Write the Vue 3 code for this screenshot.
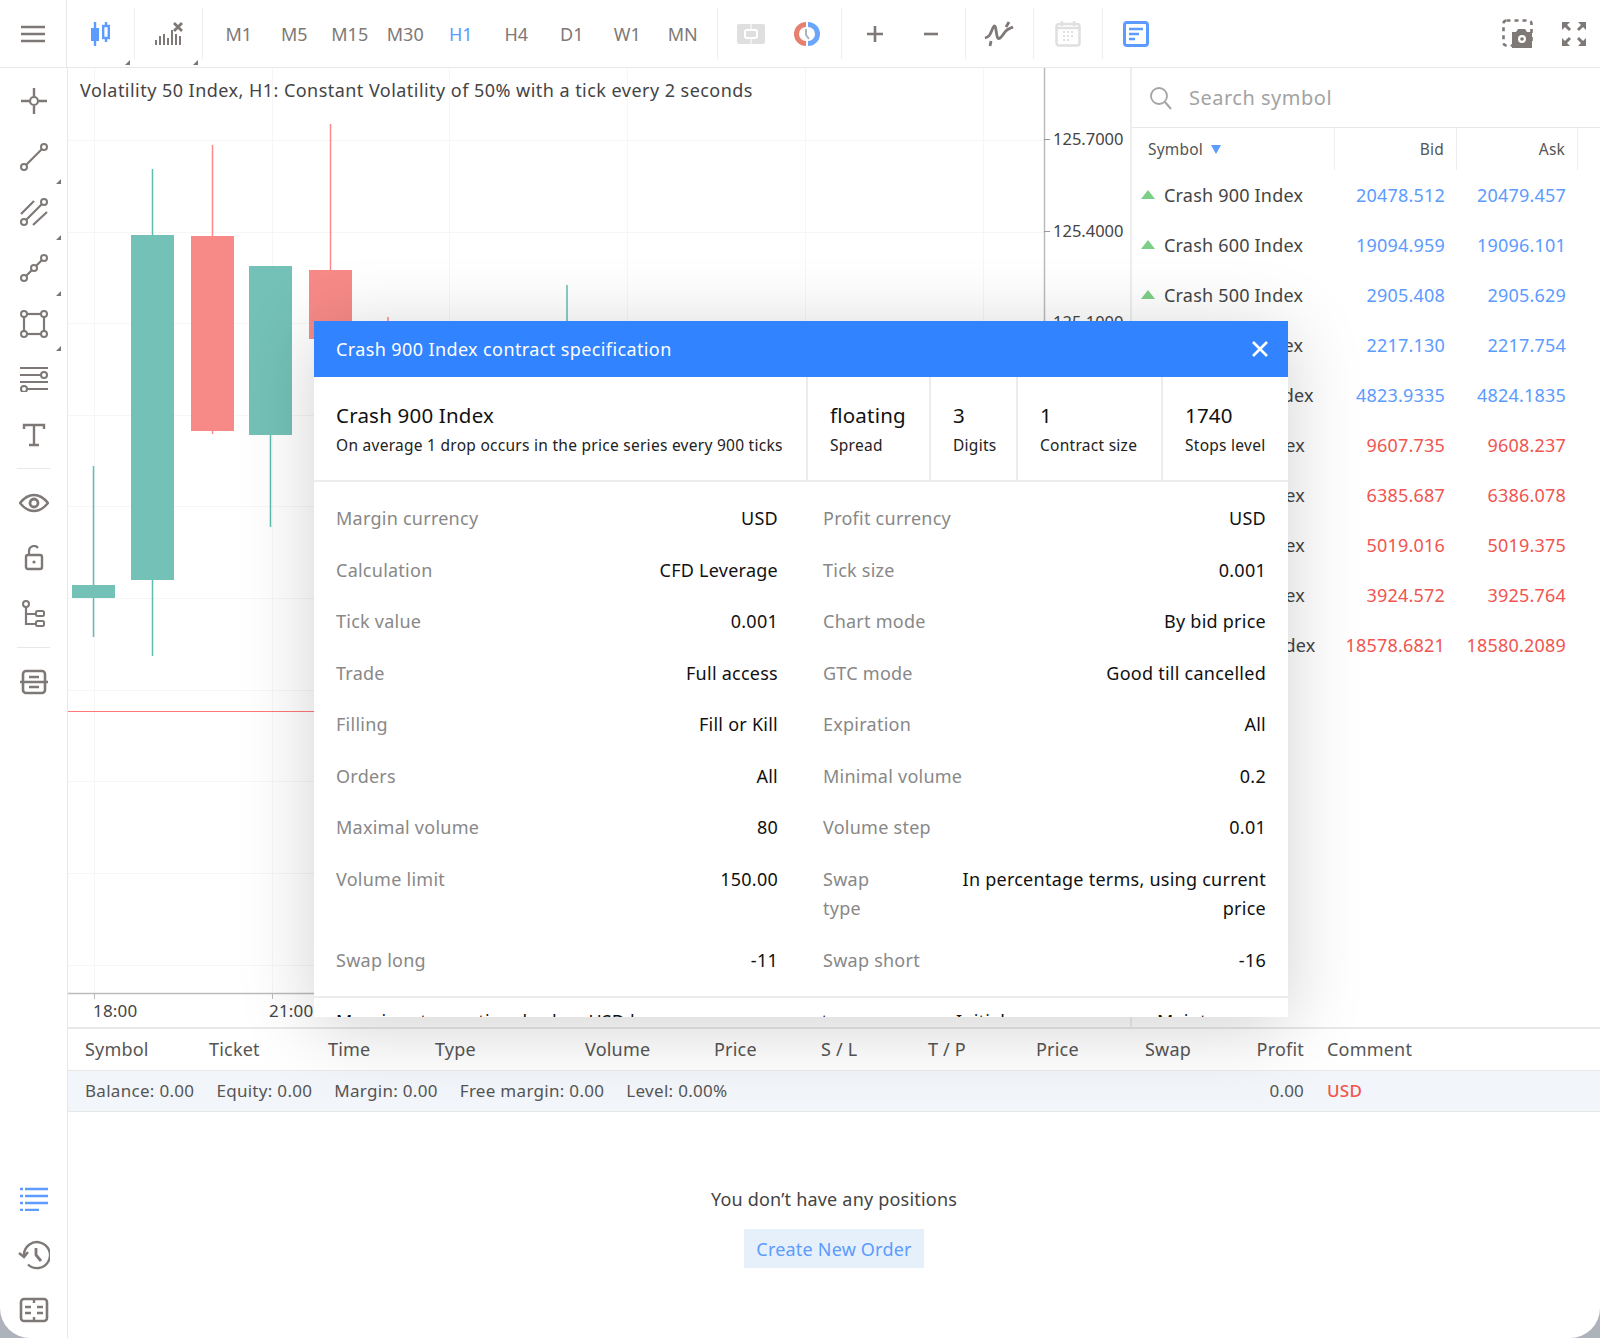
<template>
  <div class="terminal">
    <header class="topbar">
      <button class="menu-btn">
        <svg width="26" height="18" viewBox="0 0 26 18"><path d="M1 2h24M1 9h24M1 16h24" class="ic" stroke-width="2.4"/></svg>
      </button>
      <div class="tool-wide corner">
        <svg width="24" height="26" viewBox="0 0 24 26"><path d="M6 1v24M17 1v20" stroke="#5c9bff" stroke-width="2.4" fill="none"/><rect x="2" y="7" width="8" height="13" fill="#5c9bff"/><rect x="14.2" y="5" width="5.6" height="12" fill="#fff" stroke="#5c9bff" stroke-width="2.4"/></svg>
      </div>
      <div class="tool-wide corner">
        <svg width="30" height="26" viewBox="0 0 30 26"><path d="M2 19v5M6 15v9M10 13v11M14 17v7M18 9v15M22 13v11M26 15v9" class="ic" stroke-width="2"/><path d="M20 2l8 8M28 2l-8 8" class="ic" stroke-width="2.8"/></svg>
      </div>
      <div class="group tf-group">
        <span v-for="t in timeframes" :key="t" :class="['tf', { active: t === 'H1' }]">{{ t }}</span>
      </div>
      <div class="group">
        <div class="tool">
          <svg width="28" height="22" viewBox="0 0 28 22"><rect width="28" height="20" y="1" rx="2" fill="#dfdfdf"/><rect x="8" y="7" width="12" height="8" rx="2" fill="none" stroke="#fff" stroke-width="2"/><path d="M14 1v5M14 16v5" stroke="#fff" stroke-width="1"/></svg>
        </div>
        <div class="tool">
          <svg width="30" height="30" viewBox="0 0 30 30"><path d="M14 3a12 12 0 0 0 0 24v-5a7 7 0 0 1 0-14z" fill="#e8806f"/><path d="M16 3a12 12 0 0 1 0 24v-5a7 7 0 0 0 0-14z" fill="#6ca6fb"/><path d="M14 10v6l3 4" fill="none" stroke="#a9b4bd" stroke-width="2"/></svg>
        </div>
      </div>
      <div class="group">
        <div class="tool"><svg width="18" height="18" viewBox="0 0 18 18"><path d="M9 1v16M1 9h16" class="ic" stroke-width="2.6"/></svg></div>
        <div class="tool"><svg width="16" height="4" viewBox="0 0 16 4"><path d="M1 2h14" class="ic" stroke-width="2.6"/></svg></div>
      </div>
      <div class="group">
        <div class="tool">
          <svg width="30" height="28" viewBox="0 0 30 28"><path d="M1 18c4-1 5-3 7-8s3-6 4 0 1 10 4 8 4-6 7-8 4-2 6-3" class="ic" stroke-width="2.8"/><path d="M22 7l3-5M6 26l1-5" class="ic" stroke-width="2.8"/></svg>
        </div>
      </div>
      <div class="group">
        <div class="tool">
          <svg width="26" height="27" viewBox="0 0 26 27"><rect x="1.5" y="4" width="23" height="21.5" rx="2.5" fill="none" stroke="#e0e0e0" stroke-width="2.6"/><path d="M7 1v5M19 1v5M2 8h22" stroke="#e0e0e0" stroke-width="2.4"/><path d="M8 12h2M12 12h2M16 12h2M8 16h2M12 16h2M16 16h2M8 20h2M12 20h2" stroke="#e0e0e0" stroke-width="2"/></svg>
        </div>
      </div>
      <div class="group no-sep">
        <div class="tool">
          <svg width="26" height="26" viewBox="0 0 26 26"><rect x="1.5" y="1.5" width="23" height="23" rx="2.5" fill="none" stroke="#5c9bff" stroke-width="3"/><path d="M6 8h14M6 13h10M6 18h6" stroke="#5c9bff" stroke-width="2.6"/></svg>
        </div>
      </div>
      <div class="top-right">
        <div class="tool">
          <svg width="32" height="30" viewBox="0 0 32 30"><rect x="1.5" y="1.5" width="28" height="25" rx="3" fill="none" stroke="#7e7876" stroke-width="2.6" stroke-dasharray="4 4"/><path d="M10 29V13h4l2-3h7l2 3h5v16z" fill="#7e7876"/><circle cx="20" cy="20" r="4" fill="#fff"/><circle cx="20" cy="20" r="1.8" fill="#7e7876"/></svg>
        </div>
        <div class="tool">
          <svg width="26" height="26" viewBox="0 0 26 26"><path d="M2 2l7 7M24 2l-7 7M2 24l7-7M24 24l-7-7" class="ic" stroke-width="3"/><path d="M1 1h8L1 9zM25 1h-8l8 8zM1 25h8l-8-8zM25 25h-8l8-8z" fill="#7e7876"/></svg>
        </div>
      </div>
    </header>

    <div class="body">
      <aside class="rail">
        <div class="rail-top">
          <div class="rail-btn"><svg width="28" height="28" viewBox="0 0 28 28"><path d="M14 1v8M14 19v8M1 14h8M19 14h8" class="ic" stroke-width="2.4"/><circle cx="14" cy="14" r="4" class="ic" stroke-width="2.2"/></svg></div>
          <div class="rail-btn corner"><svg width="30" height="30" viewBox="0 0 30 30"><circle cx="5" cy="25" r="3" class="ic" stroke-width="2"/><circle cx="25" cy="5" r="3" class="ic" stroke-width="2"/><path d="M7.5 22.5l15-15" class="ic" stroke-width="2.2"/></svg></div>
          <div class="rail-btn corner"><svg width="30" height="30" viewBox="0 0 30 30"><circle cx="5" cy="25" r="3" class="ic" stroke-width="2"/><circle cx="25" cy="5" r="3" class="ic" stroke-width="2"/><path d="M7.5 22.5l15-15M2 17L15 4M14 28l14-13" class="ic" stroke-width="2.2"/></svg></div>
          <div class="rail-btn corner"><svg width="30" height="30" viewBox="0 0 30 30"><circle cx="5" cy="25" r="3" class="ic" stroke-width="2"/><circle cx="15" cy="15" r="3" class="ic" stroke-width="2"/><circle cx="25" cy="5" r="3" class="ic" stroke-width="2"/><path d="M7.5 22.5l5-5M17.500 12.500l5-5" class="ic" stroke-width="2.2"/></svg></div>
          <div class="rail-btn corner"><svg width="28" height="28" viewBox="0 0 28 28"><rect x="4" y="4" width="20" height="20" class="ic" stroke-width="2.2"/><g fill="#fff" stroke="#7e7876" stroke-width="2"><circle cx="4" cy="4" r="3"/><circle cx="24" cy="4" r="3"/><circle cx="4" cy="24" r="3"/><circle cx="24" cy="24" r="3"/></g></svg></div>
          <div class="rail-btn"><svg width="30" height="26" viewBox="0 0 30 26"><path d="M1 2h28M1 9h21M1 16h28M8 23h21" class="ic" stroke-width="2.2"/><circle cx="25" cy="9" r="3" fill="#fff" stroke="#7e7876" stroke-width="2"/><circle cx="5" cy="23" r="3" fill="#fff" stroke="#7e7876" stroke-width="2"/></svg></div>
          <div class="rail-btn"><svg width="24" height="24" viewBox="0 0 24 24"><path d="M2 6V2h20v4M12 2v20M7 22h10" class="ic" stroke-width="2.4"/></svg></div>
        </div>
        <div class="rail-sep"></div>
        <div class="rail-top">
          <div class="rail-btn"><svg width="30" height="20" viewBox="0 0 30 20"><path d="M1 10c4-5 9-8 14-8s10 3 14 8c-4 5-9 8-14 8S5 15 1 10z" class="ic" stroke-width="2.4"/><circle cx="15" cy="10" r="4" class="ic" stroke-width="2.8"/></svg></div>
          <div class="rail-btn"><svg width="20" height="26" viewBox="0 0 20 26"><rect x="2" y="10" width="16" height="14" rx="2" class="ic" stroke-width="2.4"/><path d="M5 10V6a5 5 0 0 1 9-3" class="ic" stroke-width="2.2"/><circle cx="10" cy="17" r="1.600" fill="#7e7876"/></svg></div>
          <div class="rail-btn"><svg width="26" height="28" viewBox="0 0 26 28"><circle cx="5" cy="4" r="3" class="ic" stroke-width="2"/><path d="M5 7v17h9M5 14h9" class="ic" stroke-width="2.2"/><rect x="15" y="11" width="8" height="5" rx="1.500" class="ic" stroke-width="2"/><rect x="15" y="21" width="8" height="5" rx="1.500" class="ic" stroke-width="2"/></svg></div>
        </div>
        <div class="rail-sep"></div>
        <div class="rail-top">
          <div class="rail-btn"><svg width="30" height="26" viewBox="0 0 30 26"><rect x="4" y="2" width="22" height="22" rx="3" class="ic" stroke-width="2.6"/><path d="M1 13h28M10 8h10M10 18h10" class="ic" stroke-width="2.400"/></svg></div>
        </div>
        <div class="rail-bottom">
          <div class="rail-btn"><svg width="28" height="24" viewBox="0 0 28 24"><path d="M0 2h3M5 2h23M0 9h3M5 9h23M0 16h3M5 16h23M0 23h3M5 23h14" stroke="#5c9bff" stroke-width="2.4" fill="none"/></svg></div>
          <div class="rail-btn"><svg width="32" height="30" viewBox="0 0 32 30"><path d="M6 15a13 13 0 1 1 4 9.500" class="ic" stroke-width="2.400"/><path d="M1 13l5 4 4-5" class="ic" stroke-width="2.400"/><path d="M18 8v7l5 6" class="ic" stroke-width="2.800"/></svg></div>
          <div class="rail-btn"><svg width="30" height="26" viewBox="0 0 30 26"><rect x="2" y="2" width="26" height="22" rx="3" class="ic" stroke-width="2.600"/><path d="M15 2v4M15 20v4M6 10h6M18 10h6M6 16h6M18 16h6" class="ic" stroke-width="2.400"/></svg></div>
        </div>
      </aside>

      <main class="main">
        <section class="upper">
          <div class="chart">
            <svg class="chart-svg" width="1062" height="960" viewBox="68 68 1062 960">
              <g stroke="#f6f6f6" stroke-width="1">
                <line v-for="x in gridX" :key="x" :x1="x" y1="68" :x2="x" y2="993"/>
                <line v-for="y in gridY" :key="y" x1="68" :y1="y" x2="1044" :y2="y"/>
              </g>
              <line x1="68" y1="711.500" x2="1044" y2="711.500" stroke="#f77"/>
              <g v-for="c in candles" :key="c.x">
                <line :x1="c.x + 21.500" :y1="c.high" :x2="c.x + 21.500" :y2="c.low" :stroke="c.up ? '#5fbcb0' : '#f88'" stroke-width="1.500"/>
                <rect v-if="c.top" :x="c.x" :y="c.top" width="43" :height="c.bottom - c.top" :fill="c.up ? '#74c1b7' : '#f78a87'"/>
              </g>
              <line x1="1044.500" y1="68" x2="1044.500" y2="993" stroke="#bbb" stroke-width="1.500"/>
              <line x1="68" y1="993.500" x2="1044" y2="993.500" stroke="#bbb" stroke-width="1.500"/>
              <line x1="94.500" y1="993" x2="94.500" y2="999" stroke="#bbb"/>
              <line x1="272.500" y1="993" x2="272.500" y2="999" stroke="#bbb"/>
              <g stroke="#999"><line x1="1044" y1="139.500" x2="1050" y2="139.500"/><line x1="1044" y1="231.500" x2="1050" y2="231.500"/><line x1="1044" y1="322.500" x2="1050" y2="322.500"/></g>
            </svg>
            <div class="chart-title">Volatility 50 Index, H1: Constant Volatility of 50% with a tick every 2 seconds</div>
            <span v-for="p in prices" :key="p.v" class="price" :style="{ top: p.y + 'px' }">{{ p.v }}</span>
            <span class="time" style="left: 25px">18:00</span>
            <span class="time" style="left: 201px">21:00</span>
          </div>

          <div class="watch">
            <div class="search">
              <svg width="24" height="24" viewBox="0 0 24 24"><circle cx="10" cy="10" r="8" fill="none" stroke="#a5a5a5" stroke-width="1.800"/><path d="M16 16l6 7" stroke="#a5a5a5" stroke-width="2" fill="none"/></svg>
              <span>Search symbol</span>
            </div>
            <div class="watch-head">
              <div class="wh-sym">Symbol <i class="sort"></i></div>
              <div class="wh-num">Bid</div>
              <div class="wh-num">Ask</div>
            </div>
            <div v-for="s in symbols" :key="s.name" class="watch-row">
              <i :class="s.up ? 'tri-up' : 'tri-down'"></i>
              <span class="sym-name">{{ s.name }}</span>
              <span :class="['num', s.up ? 'blue' : 'red']">{{ s.bid }}</span>
              <span :class="['num', s.up ? 'blue' : 'red']">{{ s.ask }}</span>
            </div>
          </div>
        </section>

        <section class="lower">
          <div class="pos-head">
            <span v-for="h in posHeaders" :key="h.k" :class="{ 'ta-r': h.k === 'profit' }">{{ h.t }}</span>
          </div>
          <div class="pos-sum">
            <span>Balance: 0.00</span>
            <span>Equity: 0.00</span>
            <span>Margin: 0.00</span>
            <span>Free margin: 0.00</span>
            <span>Level: 0.00%</span>
            <span class="sum-profit">0.00</span>
            <span class="sum-cur">USD</span>
          </div>
          <div class="empty">
            <p>You don’t have any positions</p>
            <button class="create">Create New Order</button>
          </div>
        </section>
      </main>
    </div>

    <div class="modal">
      <div class="modal-head">
        <span>Crash 900 Index contract specification</span>
        <svg width="18" height="18" viewBox="0 0 18 18"><path d="M2 2l14 14M16 2L2 16" stroke="#fff" stroke-width="2.600" fill="none"/></svg>
      </div>
      <div class="info">
        <div class="info-cell">
          <b>Crash 900 Index</b>
          <small>On average 1 drop occurs in the price series every 900 ticks</small>
        </div>
        <div v-for="i in infoCells" :key="i.l" class="info-cell">
          <b>{{ i.v }}</b>
          <small>{{ i.l }}</small>
        </div>
      </div>
      <div class="spec">
        <div v-for="r in specs" :key="r.l" class="spec-row">
          <span class="spec-l">{{ r.l }}</span>
          <span class="spec-v">{{ r.v }}</span>
        </div>
      </div>
      <div class="rates">
        <span>Margin rates: notional value, USD base</span>
        <span>rates</span>
        <span>Initial</span>
        <span class="ta-r">Maintenance</span>
      </div>
    </div>
  </div>
</template>

<script setup>
const timeframes = ['M1', 'M5', 'M15', 'M30', 'H1', 'H4', 'D1', 'W1', 'MN']

const gridX = [94.5, 272.5, 449.5, 627.5, 805.5, 983.5]
const gridY = [140.5, 232.5, 323.5, 415.5, 506.5, 598.5, 690.5, 781.5, 873.5, 965.5]

const candles = [
  { x: 72, high: 466, low: 637, top: 585, bottom: 598, up: true },
  { x: 131, high: 169, low: 656, top: 235, bottom: 580, up: true },
  { x: 191, high: 145, low: 434, top: 236, bottom: 431, up: false },
  { x: 249, high: 266, low: 527, top: 266, bottom: 435, up: true },
  { x: 309, high: 124, low: 339, top: 270, bottom: 339, up: false },
  { x: 366.5, high: 317, low: 330, up: false },
  { x: 545.5, high: 285, low: 330, up: true }
]

const prices = [
  { v: '125.7000', y: 59 },
  { v: '125.4000', y: 151 },
  { v: '125.1000', y: 242 }
]

const symbols = [
  { name: 'Crash 900 Index', bid: '20478.512', ask: '20479.457', up: true },
  { name: 'Crash 600 Index', bid: '19094.959', ask: '19096.101', up: true },
  { name: 'Crash 500 Index', bid: '2905.408', ask: '2905.629', up: true },
  { name: 'Crash 300 Index', bid: '2217.130', ask: '2217.754', up: true },
  { name: 'Crash 1000 Index', bid: '4823.9335', ask: '4824.1835', up: true },
  { name: 'Boom 900 Index', bid: '9607.735', ask: '9608.237', up: false },
  { name: 'Boom 600 Index', bid: '6385.687', ask: '6386.078', up: false },
  { name: 'Boom 500 Index', bid: '5019.016', ask: '5019.375', up: false },
  { name: 'Boom 300 Index', bid: '3924.572', ask: '3925.764', up: false },
  { name: 'Boom 1000 Index', bid: '18578.6821', ask: '18580.2089', up: false }
]

const posHeaders = [
  { k: 'symbol', t: 'Symbol' },
  { k: 'ticket', t: 'Ticket' },
  { k: 'time', t: 'Time' },
  { k: 'type', t: 'Type' },
  { k: 'volume', t: 'Volume' },
  { k: 'price', t: 'Price' },
  { k: 'sl', t: 'S / L' },
  { k: 'tp', t: 'T / P' },
  { k: 'price2', t: 'Price' },
  { k: 'swap', t: 'Swap' },
  { k: 'profit', t: 'Profit' },
  { k: 'comment', t: 'Comment' }
]

const infoCells = [
  { v: 'floating', l: 'Spread' },
  { v: '3', l: 'Digits' },
  { v: '1', l: 'Contract size' },
  { v: '1740', l: 'Stops level' }
]

const specs = [
  { l: 'Margin currency', v: 'USD' },
  { l: 'Profit currency', v: 'USD' },
  { l: 'Calculation', v: 'CFD Leverage' },
  { l: 'Tick size', v: '0.001' },
  { l: 'Tick value', v: '0.001' },
  { l: 'Chart mode', v: 'By bid price' },
  { l: 'Trade', v: 'Full access' },
  { l: 'GTC mode', v: 'Good till cancelled' },
  { l: 'Filling', v: 'Fill or Kill' },
  { l: 'Expiration', v: 'All' },
  { l: 'Orders', v: 'All' },
  { l: 'Minimal volume', v: '0.2' },
  { l: 'Maximal volume', v: '80' },
  { l: 'Volume step', v: '0.01' },
  { l: 'Volume limit', v: '150.00' },
  { l: 'Swap\ntype', v: 'In percentage terms, using current\nprice' },
  { l: 'Swap long', v: '-11' },
  { l: 'Swap short', v: '-16' }
]
</script>

<style>
html, body { margin: 0; background: #aeb2ba; }
</style>

<style scoped>
.terminal { position: relative; width: 1600px; height: 1338px; background: #fff; overflow: hidden; border-radius: 0 0 30px 30px; font-family: "Noto Sans", sans-serif; font-size: 17.5px; color: #444; letter-spacing: 0.2px; }
.ic { fill: none; stroke: #7e7876; }
svg { display: block; }
button { font-family: inherit; border: none; background: none; padding: 0; }

.topbar { display: flex; height: 67px; border-bottom: 1px solid #e8e8e8; box-sizing: content-box; }
.menu-btn { width: 67px; display: flex; align-items: center; justify-content: center; border-right: 1px solid #e8e8e8; }
.tool-wide { width: 67px; display: flex; align-items: center; justify-content: center; position: relative; border-right: 1px solid #eee; margin: 8px 0; box-sizing: content-box; }
.corner::after { content: ""; position: absolute; right: -1px; bottom: -8px; border-style: solid; border-width: 0 0 5px 5px; border-color: transparent transparent #777 transparent; }
.tool-wide.corner::after { right: 4px; bottom: -6px; }
.group { display: flex; padding: 0 6px; margin: 8px 0; border-right: 1px solid #eee; }
.group.tf-group { padding-left: 8px; }
.group.no-sep { border-right: none; }
.tf, .tool { width: 55.5px; display: flex; align-items: center; justify-content: center; color: #7e7876; font-size: 18px; letter-spacing: 0; }
.tf.active { color: #5c9bff; }
.top-right { margin-left: auto; margin-right: -2px; display: flex; }
.top-right .tool { width: 56px; }

.body { display: flex; height: 1270px; }
.rail { width: 67px; border-right: 1px solid #e8e8e8; display: flex; flex-direction: column; padding-top: 5px; flex: none; }
.rail-btn { height: 55.7px; display: flex; align-items: center; justify-content: center; position: relative; }
.rail-btn.corner::after { right: 6px; bottom: 0; }
.rail-sep { height: 1px; margin: 5.5px 17px; background: #e8e8e8; }
.rail-bottom { margin-top: auto; }
.rail-bottom .rail-btn { height: 55.5px; }

.main { flex: 1; min-width: 0; display: flex; flex-direction: column; }
.upper { display: flex; height: 959px; border-bottom: 2px solid #e8e8e8; }
.chart { position: relative; width: 1062px; overflow: hidden; }
.chart-svg { position: absolute; left: 0; top: 0; }
.chart-title { position: absolute; left: 12px; top: 10px; white-space: nowrap; font-size: 18px; letter-spacing: 0.46px; color: #444; }
.price { position: absolute; left: 985px; font-size: 16.5px; letter-spacing: 0; color: #444; line-height: 24px; }
.time { position: absolute; top: 931px; font-size: 17px; color: #444; line-height: 24px; }

.watch { flex: 1; border-left: 2px solid #eee; }
.search { height: 59px; border-bottom: 1px solid #e8e8e8; display: flex; align-items: center; gap: 16px; padding-left: 17px; color: #a3a3a3; font-size: 20px; letter-spacing: 0.5px; }
.watch-head { display: grid; grid-template-columns: 203px 122px 121px; height: 42px; font-size: 15.5px; color: #555; }
.watch-head > div { border-right: 1px solid #eee; display: flex; align-items: center; }
.wh-sym { padding-left: 16px; gap: 8px; }
.wh-num { justify-content: flex-end; padding-right: 12px; }
.sort { width: 0; height: 0; border-left: 5.5px solid transparent; border-right: 5.5px solid transparent; border-top: 9px solid #5c9bff; }
.watch-row { display: grid; grid-template-columns: 30px 173px 122px 121px; height: 50.05px; align-items: center; font-size: 18px; position: relative; top: -0.5px; }
.tri-up, .tri-down { width: 0; height: 0; margin-left: 9px; border-left: 7px solid transparent; border-right: 7px solid transparent; }
.tri-up { border-bottom: 9px solid #7ccf86; }
.tri-down { border-top: 9px solid #f25f5c; }
.sym-name { white-space: nowrap; padding-left: 2px; }
.num { text-align: right; padding-right: 12px; white-space: nowrap; }
.blue { color: #5c9bff; }
.red { color: #f0554f; }

.lower { flex: 1; display: flex; flex-direction: column; }
.pos-head { display: grid; grid-template-columns: 124px 119px 107px 150px 129px 107px 107px 108px 109px 111px 48px 1fr; height: 42px; padding: 0 0 2px 17px; box-sizing: border-box; align-items: center; border-bottom: 1px solid #e8e8e8; font-size: 18px; color: #555; }
.pos-head .ta-r { text-align: right; }
.pos-head span:last-child { padding-left: 23px; }
.pos-sum { display: flex; align-items: center; gap: 22px; height: 41px; box-sizing: border-box; padding: 0 0 1px 17px; background: #f2f5f9; border-bottom: 1px solid #e8e8e8; font-size: 17px; letter-spacing: 0.3px; color: #555; }
.sum-profit { margin-left: auto; letter-spacing: 0.2px; }
.sum-cur { width: 273px; margin-left: 1px; color: #f0554f; font-weight: 500; }
.empty { flex: 1; display: flex; flex-direction: column; align-items: center; padding-top: 70px; }
.empty p { margin: 0 0 13px; font-size: 18px; line-height: 34px; color: #444; }
.create { width: 180px; height: 39px; background: #e6f0fa; color: #5c9bff; font-size: 18px; letter-spacing: 0.2px; }

.modal { position: absolute; left: 314px; top: 321px; width: 974px; height: 696px; background: #fff; overflow: hidden; box-shadow: 0 10px 70px rgba(0, 0, 0, 0.18); color: #111; }
.modal-head { height: 56px; background: #3183ff; color: #fff; display: flex; align-items: center; justify-content: space-between; padding: 0 19px 0 22px; font-size: 18px; letter-spacing: 0.39px; }
.info { display: grid; grid-template-columns: 494px 123px 87px 145px 1fr; height: 105px; border-bottom: 2px solid #ececec; box-sizing: border-box; }
.info-cell { border-right: 2px solid #ececec; padding: 23px 0 0 22px; display: flex; flex-direction: column; white-space: nowrap; }
.info-cell:last-child { border-right: none; }
.info-cell b { font-weight: 400; font-size: 20.5px; line-height: 31px; }
.info-cell small { font-size: 15.5px; line-height: 28px; letter-spacing: 0.27px; color: #222; }
.spec { display: grid; grid-template-columns: 442px 443px; column-gap: 45px; padding: 11px 22px 10px; border-bottom: 2px solid #ececec; }
.spec-row { display: flex; justify-content: space-between; padding: 11px 0; line-height: 29.5px; font-size: 18px; letter-spacing: 0.25px; }
.spec-l { color: #888; white-space: pre-line; }
.spec-v { color: #111; text-align: right; white-space: pre-line; }
.rates { display: grid; grid-template-columns: 468px 152px 201px 1fr; padding: 11px 22px 0; font-size: 18px; white-space: nowrap; }
.rates .ta-r { text-align: right; }
</style>
